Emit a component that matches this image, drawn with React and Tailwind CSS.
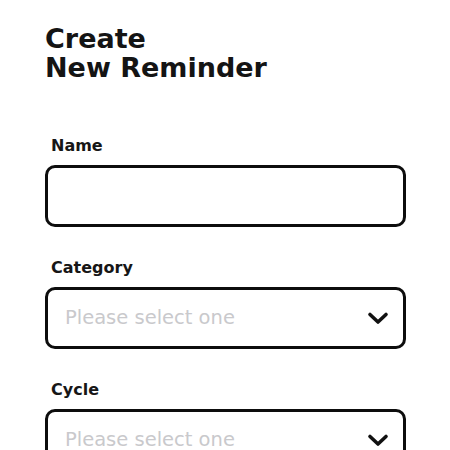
const Chevron = () => (
  <svg width="24" height="16" viewBox="0 0 24 16" fill="none" className="shrink-0">
    <polyline
      points="4,4.5 12,12 20,4.5"
      stroke="#111"
      strokeWidth="3.6"
      strokeLinecap="round"
      strokeLinejoin="round"
    />
  </svg>
);

const Field = ({ label, children }) => (
  <div className="flex flex-col">
    <label className="pl-[6px] text-[16px] leading-[22px] font-bold text-[#161616]">
      {label}
    </label>
    <div className="mt-[8px] h-[62px] w-[361px] rounded-[10px] border-[3px] border-[#0d0d0d] bg-white flex items-center pl-[17px] pr-[13px]">
      {children}
    </div>
  </div>
);

const Select = () => (
  <div className="flex w-full items-center justify-between">
    <span className="text-[19.5px] text-[#c9c9cc]">Please select one</span>
    <Chevron />
  </div>
);

export default function App() {
  return (
    <div
      className="h-[450px] w-[450px] overflow-hidden bg-white pl-[45px] pt-[24px]"
      style={{ fontFamily: "'DejaVu Sans', 'Noto Sans', sans-serif" }}
    >
      <h1 className="text-[27px] leading-[29px] font-bold text-[#141414]">
        Create
        <br />
        New Reminder
      </h1>

      <div className="mt-[53px] flex flex-col gap-[30px]">
        <Field label="Name" />
        <Field label="Category">
          <Select />
        </Field>
        <Field label="Cycle">
          <Select />
        </Field>
      </div>
    </div>
  );
}
